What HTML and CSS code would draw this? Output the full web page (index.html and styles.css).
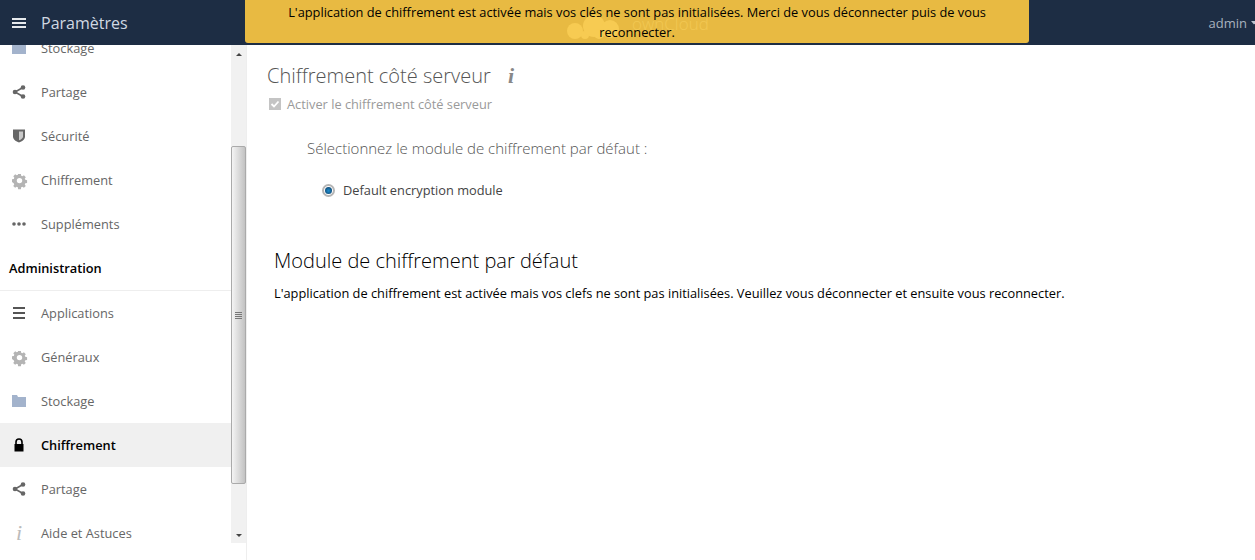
FILE: index.html
```html
<!DOCTYPE html>
<html lang="fr">
<head>
<meta charset="utf-8">
<title>Paramètres</title>
<link rel="stylesheet" href="styles.css">
</head>
<body>
<header class="topbar">
  <div class="brand">
    <svg class="burger" viewBox="0 0 14 12" width="14" height="12"><path d="M0 1h14v2H0zM0 5h14v2H0zM0 9h14v2H0z" fill="#e6e9ed"/></svg>
    <span class="brand-title">Paramètres</span>
  </div>
  <div class="user"><span>admin</span><svg class="caret" viewBox="0 0 6 4" width="6" height="4"><path d="M0 0h6L3 3.5z" fill="#b9c2cd"/></svg></div>
  <div class="notice">
    <p class="notice-text">L'application de chiffrement est activée mais vos clés ne sont pas initialisées. Merci de vous déconnecter puis de vous reconnecter.</p>
  </div>
  <div class="logo">
    <svg viewBox="0 0 54 24" width="54" height="24"><g fill="#f7cb52"><circle cx="9" cy="16" r="8"/><circle cx="19" cy="20" r="4"/><circle cx="28" cy="11" r="11"/><circle cx="44" cy="14" r="9"/><circle cx="33" cy="19" r="5"/></g></svg>
    <span class="logo-text">ownCloud</span>
  </div>
</header>
<div class="main">
  <aside class="sidebar">
    <nav class="nav">
      <ul class="nav-list">
        <li class="nav-item"><svg class="ico" viewBox="0 0 14 14"><path d="M0 1h5l1 2h8v10H0z" fill="#a3b3cc"/></svg><span>Stockage</span></li>
        <li class="nav-item"><svg class="ico" viewBox="0 0 14 14"><path d="M11 2.500L3 7l8 4.500" fill="none" stroke="#666" stroke-width="1.600"/><circle cx="11" cy="2.500" r="2.300" fill="#666"/><circle cx="3" cy="7" r="2.300" fill="#666"/><circle cx="11" cy="11.500" r="2.300" fill="#666"/></svg><span>Partage</span></li>
        <li class="nav-item"><svg class="ico" viewBox="0 0 14 14"><path d="M1 .5h12v7c0 3-3 5-6 6-3-1-6-3-6-6z" fill="#666"/><path d="M7 2.500h4v5c0 2-2 3-4 3.800z" fill="#c9c9c9"/></svg><span>Sécurité</span></li>
        <li class="nav-item"><svg class="ico ico-gear" viewBox="0 0 16 16"><use href="#gear"/></svg><span>Chiffrement</span></li>
        <li class="nav-item"><svg class="ico" viewBox="0 0 14 14"><g fill="#666"><circle cx="2" cy="7" r="1.800"/><circle cx="7" cy="7" r="1.800"/><circle cx="12" cy="7" r="1.800"/></g></svg><span>Suppléments</span></li>
        <li class="nav-head">Administration</li>
        <li class="nav-item"><svg class="ico" viewBox="0 0 14 14"><path d="M1 1h12v2H1zM1 6h12v2H1zM1 11h12v2H1z" fill="#555"/></svg><span>Applications</span></li>
        <li class="nav-item"><svg class="ico ico-gear" viewBox="0 0 16 16"><use href="#gear"/></svg><span>Généraux</span></li>
        <li class="nav-item"><svg class="ico" viewBox="0 0 14 14"><path d="M0 1h5l1 2h8v10H0z" fill="#a3b3cc"/></svg><span>Stockage</span></li>
        <li class="nav-item nav-active"><svg class="ico" viewBox="0 0 14 14"><path d="M4 6V4a3 3 0 016 0v2" fill="none" stroke="#000" stroke-width="1.600"/><path d="M2.500 6h9v7.500h-9z" fill="#000"/></svg><span>Chiffrement</span></li>
        <li class="nav-item"><svg class="ico" viewBox="0 0 14 14"><path d="M11 2.500L3 7l8 4.500" fill="none" stroke="#666" stroke-width="1.600"/><circle cx="11" cy="2.500" r="2.300" fill="#666"/><circle cx="3" cy="7" r="2.300" fill="#666"/><circle cx="11" cy="11.500" r="2.300" fill="#666"/></svg><span>Partage</span></li>
        <li class="nav-item"><span class="ico ico-i">i</span><span>Aide et Astuces</span></li>
      </ul>
    </nav>
    <div class="scrollbar">
      <div class="sb-btn sb-up"><svg viewBox="0 0 6 3" width="6" height="3"><path d="M0 3h6L3 0z" fill="#444"/></svg></div>
      <div class="sb-track">
        <div class="sb-thumb"><svg viewBox="0 0 7 7" width="7" height="7"><path d="M0 .5h7M0 2.500h7M0 4.500h7M0 6.500h7" stroke="#777" fill="none"/></svg></div>
      </div>
      <div class="sb-btn"><svg viewBox="0 0 6 3" width="6" height="3"><path d="M0 0h6L3 3z" fill="#444"/></svg></div>
    </div>
  </aside>
  <main class="content">
    <section class="sec-one">
      <h2 class="sec-title">Chiffrement côté serveur <span class="sec-info">i</span></h2>
      <label class="check-row">
        <svg class="checkbox" viewBox="0 0 12 12" width="12" height="12"><rect width="12" height="12" fill="#c4c4c4"/><path d="M2.500 6l2.500 2.500 4.500-5" fill="none" stroke="#fff" stroke-width="1.800"/></svg>
        <span>Activer le chiffrement côté serveur</span>
      </label>
      <div class="module-block">
        <p class="module-label">Sélectionnez le module de chiffrement par défaut :</p>
        <label class="radio-row"><span class="radio"><span class="radio-dot"></span></span><span>Default encryption module</span></label>
      </div>
    </section>
    <section class="sec-two">
      <h2 class="sec2-title">Module de chiffrement par défaut</h2>
      <p class="sec2-text">L'application de chiffrement est activée mais vos clefs ne sont pas initialisées. Veuillez vous déconnecter et ensuite vous reconnecter.</p>
    </section>
  </main>
</div>
<svg class="defs" width="0" height="0"><defs><g id="gear"><path d="M6.500 1h3l.3 1.900 1.300.6 1.600-1.100 2 2-1.100 1.600.6 1.300 1.900.3v3l-1.900.3-.6 1.300 1.100 1.600-2 2-1.600-1.100-1.300.6-.3 1.900h-3l-.3-1.900-1.300-.6-1.600 1.100-2-2 1.100-1.600-.6-1.300L0 9.600v-3l1.900-.3.6-1.300-1.100-1.600 2-2 1.600 1.100 1.300-.6zM8 5.200a2.900 2.900 0 100 5.800 2.900 2.900 0 000-5.800z" fill="#b4b4b4" fill-rule="evenodd"/></g></defs></svg>
</body>
</html>
```
FILE: styles.css
```css
* { box-sizing: border-box; }
html, body { margin: 0; padding: 0; height: 100%; overflow: hidden; background: #fff; }
body { font-family: "Open Sans", "Liberation Sans", sans-serif; font-size: 12.8px; color: #555; }
ul { list-style: none; margin: 0; padding: 0; }
p, h2 { margin: 0; }
.defs { position: absolute; }

.topbar { position: relative; height: 45px; background: #1d2d44; display: flex; align-items: center; justify-content: space-between; }
.brand { display: flex; align-items: center; padding-left: 12px; }
.burger { display: block; }
.brand-title { margin-left: 15px; font-size: 16px; color: #d0d8e2; font-weight: 400; }
.user { display: flex; align-items: center; gap: 4px; color: #a8b2bf; font-size: 13px; margin-right: -2px; }
.caret { display: block; }

.notice { position: absolute; left: 245px; top: 0; width: 784px; height: 43px; background: #e8ba42; border-radius: 0 0 3px 3px; padding: 2px 30px 0; }
.notice-text { position: relative; z-index: 2; color: #000; font-size: 12.8px; line-height: 20px; text-align: center; }
.logo { position: absolute; left: 566px; top: 15px; display: flex; gap: 12px; z-index: 1; }
.logo svg { display: block; }
.logo-text { color: #f2c853; font-size: 17px; line-height: 18px; font-weight: 300; }

.main { display: flex; height: 515px; }
.sidebar { width: 246px; height: 498px; display: flex; flex: none; }
.nav { width: 231px; height: 498px; overflow: hidden; }
.nav-list { margin-top: -19px; }
.nav-item { height: 44px; display: flex; align-items: center; color: #666; }
.ico { width: 14px; height: 14px; margin: 0 15px 0 12px; flex: none; display: block; overflow: visible; }
.ico-gear { width: 15px; height: 15px; margin: 0 14px 0 12px; }
.ico-i { height: 20px; font-family: "Liberation Serif", serif; font-style: italic; font-size: 22px; line-height: 20px; color: #bbb; text-align: center; }
.nav-active { background: #f0f0f0; color: #000; font-weight: 600; }
.nav-head { height: 45px; padding: 13px 0 0 9px; color: #000; font-weight: 600; border-bottom: 1px solid #eee; }

.scrollbar { width: 15px; height: 498px; background: #f1f1f1; display: flex; flex-direction: column; }
.sb-btn { height: 16px; flex: none; display: flex; align-items: center; justify-content: center; padding-left: 1px; }
.sb-up { padding-top: 2px; }
.sb-btn svg { display: block; }
.sb-track { flex: 1; padding-top: 85px; }
.sb-thumb { height: 338px; width: 15px; border: 1px solid #aaa; border-radius: 2px; background: linear-gradient(to right, #f4f4f4, #c2c2c2); display: flex; align-items: center; justify-content: center; }
.sb-thumb svg { display: block; }

.content { flex: 1; border-left: 1px solid #eee; padding: 19px 0 0 20px; }
.sec-title { font-size: 20px; font-weight: 300; color: #555; line-height: 24px; }
.sec-info { font-family: "Liberation Serif", serif; font-style: italic; font-size: 22px; font-weight: 700; color: #888; margin-left: 12px; }
.check-row { display: flex; align-items: center; gap: 6px; margin-top: 6px; padding-left: 2px; height: 20px; color: #9a9a9a; }
.checkbox { display: block; }
.module-block { padding: 24px 0 0 40px; }
.module-label { font-size: 15px; line-height: 20px; font-weight: 300; color: #555; }
.radio-row { display: flex; align-items: center; gap: 8px; margin-top: 22px; padding-left: 15px; color: #444; height: 20px; }
.radio { width: 13px; height: 13px; border-radius: 50%; border: 2px solid #b5b5b5; background: #fff; display: flex; align-items: center; justify-content: center; }
.radio-dot { width: 7px; height: 7px; border-radius: 50%; background: radial-gradient(circle at 50% 55%, #1f8fd0, #0a3358); }
.sec-two { padding: 48px 0 0 7px; }
.sec2-title { font-size: 20px; font-weight: 300; color: #000; line-height: 26px; }
.sec2-text { margin-top: 9px; color: #000; line-height: 20px; font-size: 12.8px; }
```
